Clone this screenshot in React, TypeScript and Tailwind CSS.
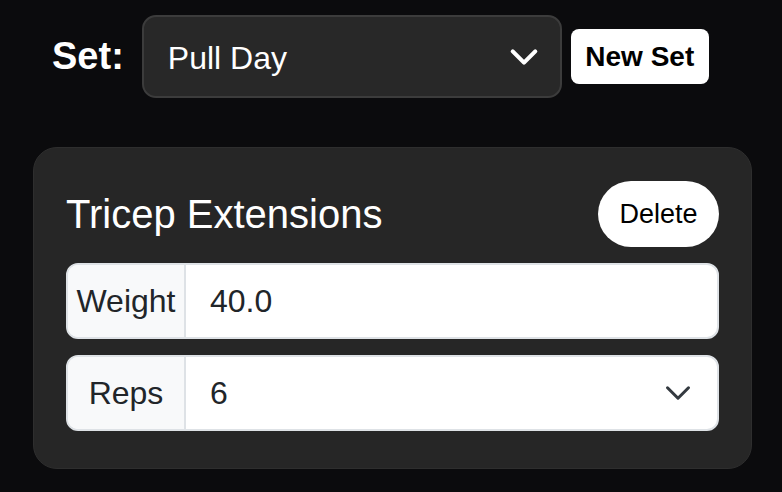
function Chevron({ className, weight = 2 }: { className: string; weight?: number }) {
  return (
    <svg viewBox="0 0 16 16" fill="none" className={className} aria-hidden>
      <path d="M2 5l6 6 6-6" stroke="currentColor" strokeWidth={weight} strokeLinecap="round" strokeLinejoin="round" />
    </svg>
  )
}

function Field({ label, value, select }: { label: string; value: string; select?: boolean }) {
  return (
    <div className="flex h-[76px] overflow-hidden rounded-[12px] border-2 border-[#dee2e6] bg-white text-[32px] text-[#212529]">
      <div className="flex w-[118px] shrink-0 items-center justify-center border-r-2 border-[#dee2e6] bg-[#f8f9fa]">
        {label}
      </div>
      <div className="flex flex-1 items-center justify-between pl-[24px] pr-[25px]">
        <span>{value}</span>
        {select && <Chevron className="h-[28px] w-[28px] text-[#343a40]" weight={1.75} />}
      </div>
    </div>
  )
}

export default function App() {
  return (
    <div className="min-h-screen bg-[#0b0b0d] font-['Liberation_Sans',Arial,sans-serif] text-white">
      <div className="flex items-center pl-[52px] pt-[15px]">
        <span className="mr-[18px] text-[38px] font-bold">Set:</span>
        <div className="flex h-[83px] w-[420px] items-center justify-between rounded-[14px] border-2 border-[#3c3c3c] bg-[#282828] pl-[24px] pr-[21px] text-[32px]">
          <span className="pt-[2px]">Pull Day</span>
          <Chevron className="h-[30px] w-[30px] text-white" weight={2.2} />
        </div>
        <button className="ml-[9px] h-[55px] w-[138px] rounded-[8px] bg-white text-[28px] font-bold text-black">
          New Set
        </button>
      </div>

      <div className="ml-[33px] mt-[49px] w-[719px] rounded-[24px] border border-[#2e2e2e] bg-[#262626] px-[32px] pb-[37px] pt-[33px]">
        <div className="flex items-center justify-between">
          <h2 className="text-[40px]">Tricep Extensions</h2>
          <button className="h-[66px] w-[121px] rounded-full bg-white text-[27px] text-black">Delete</button>
        </div>
        <div className="mt-[16px] flex flex-col gap-[16px]">
          <Field label="Weight" value="40.0" />
          <Field label="Reps" value="6" select />
        </div>
      </div>
    </div>
  )
}
